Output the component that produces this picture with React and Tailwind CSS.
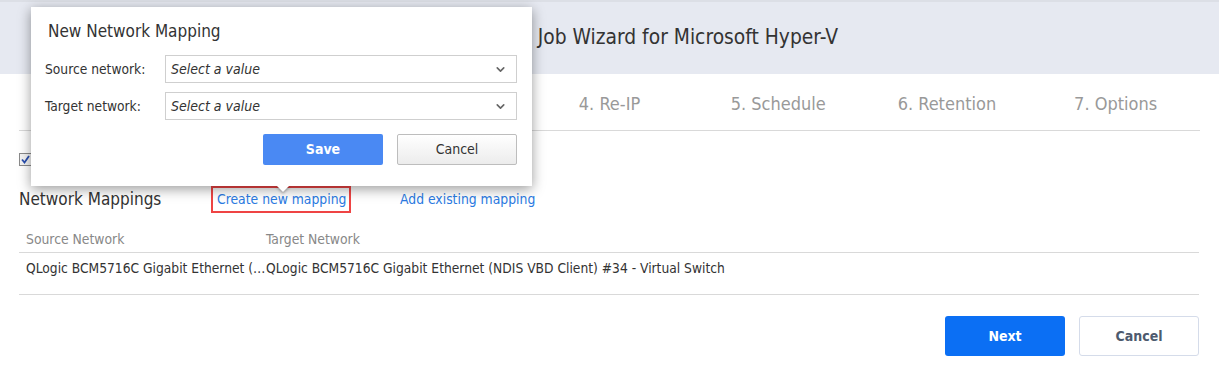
import {ChevronDown} from 'lucide-react';

const font = {fontFamily: '"DejaVu Sans Condensed", "DejaVu Sans", sans-serif'};

const steps = ['1. Source', '2. Destination', '3. Networks', '4. Re-IP', '5. Schedule', '6. Retention', '7. Options'];

function SelectBox() {
  return (
    <div className="flex h-[28px] w-[352px] items-center justify-between border border-[#cfcfcf] bg-white pl-[5px] pr-[9px]">
      <span className="text-[14px] italic text-[#333]">Select a value</span>
      <ChevronDown size={13} strokeWidth={3} className="text-[#666]" />
    </div>
  );
}

function MappingPopup() {
  return (
    <div className="absolute left-[31px] top-[7px] h-[179px] w-[501px] bg-white shadow-[0_3px_12px_rgba(0,0,0,0.4)]">
      <div className="pl-[17px] pt-[14px] text-[17px] leading-[20px] text-[#333]">New Network Mapping</div>
      <div className="mt-[14px] flex flex-col gap-[9px] pl-[14px]">
        <div className="flex items-center">
          <span className="w-[120px] text-[13.7px] text-[#333]">Source network:</span>
          <SelectBox />
        </div>
        <div className="flex items-center">
          <span className="w-[120px] text-[13.7px] text-[#333]">Target network:</span>
          <SelectBox />
        </div>
      </div>
      <div className="mt-[14px] flex justify-end gap-[14px] pr-[15px]">
        <button className="h-[31px] w-[120px] rounded-[2px] bg-[#4a89f3] text-[14px] font-bold text-white">Save</button>
        <button className="h-[31px] w-[120px] rounded-[2px] border border-[#bdbdbd] bg-gradient-to-b from-white to-[#ececec] text-[14px] text-[#333]">Cancel</button>
      </div>
      <div className="absolute left-[245px] top-[178px] h-0 w-0 border-x-[7px] border-t-[7px] border-x-transparent border-t-white drop-shadow-[0_2px_1px_rgba(0,0,0,0.25)]" />
    </div>
  );
}

function OldCheckbox() {
  return (
    <span className="flex h-[13px] w-[13px] items-center justify-center border border-[#8a8a8a] bg-[#f4f4f4]">
      <svg width="9" height="9" viewBox="0 0 9 9">
        <path d="M1 4.5 L3.5 7.5 L8 1" fill="none" stroke="#2a4fb0" strokeWidth="1.8" />
      </svg>
    </span>
  );
}

export default function App() {
  return (
    <div className="relative h-[372px] w-[1219px] overflow-hidden bg-white" style={font}>
      <div className="flex h-[74px] items-center justify-end gap-[16px] border-t-2 border-[#dcdfe6] bg-[#e6e9f1] pr-[381px] text-[20.8px] text-[#333]">
        <span>New Replication</span>
        <span>Job Wizard for Microsoft Hyper-V</span>
      </div>
      <div className="mx-[19px] grid h-[57px] grid-cols-7 items-center border-b border-[#d9d9d9] pt-[3px] text-[18px] text-[#999]">
        {steps.map((s) => (
          <div key={s} className="text-center">{s}</div>
        ))}
      </div>
      <div className="pl-[19px] pr-[20px]">
        <div className="flex h-[55px] items-center gap-[6px] pt-[2px]">
          <OldCheckbox />
          <span className="text-[14px] text-[#333]">Enable network mapping</span>
        </div>
        <div className="flex h-[27px] items-center">
          <span className="w-[192px] text-[17px] text-[#333]">Network Mappings</span>
          <span className="flex h-[27px] w-[140px] items-center border-2 border-[#ef4444] pl-[4px] text-[13.8px] text-[#2a7ae2]">Create new mapping</span>
          <span className="ml-[49px] text-[13.8px] text-[#2a7ae2]">Add existing mapping</span>
        </div>
        <div className="mt-[13px] flex h-[27px] items-center border-b border-[#d9d9d9] text-[13.8px] text-[#888]">
          <span className="w-[247px] pl-[7px]">Source Network</span>
          <span>Target Network</span>
        </div>
        <div className="flex h-[42px] items-start border-b border-[#d9d9d9] pt-[6px] text-[13.7px] leading-[18px] text-[#333]">
          <span className="w-[247px] truncate pl-[7px]">QLogic BCM5716C Gigabit Ethernet (NDIS VBD Client) #34</span>
          <span>QLogic BCM5716C Gigabit Ethernet (NDIS VBD Client) #34 - Virtual Switch</span>
        </div>
        <div className="mt-[21px] flex justify-end gap-[14px]">
          <button className="h-[40px] w-[120px] rounded-[3px] bg-[#0b6ff4] text-[14px] font-bold text-white">Next</button>
          <button className="h-[40px] w-[120px] rounded-[3px] border border-[#d5dcea] bg-white text-[14px] font-bold text-[#4d5a6e]">Cancel</button>
        </div>
      </div>
      <MappingPopup />
    </div>
  );
}
